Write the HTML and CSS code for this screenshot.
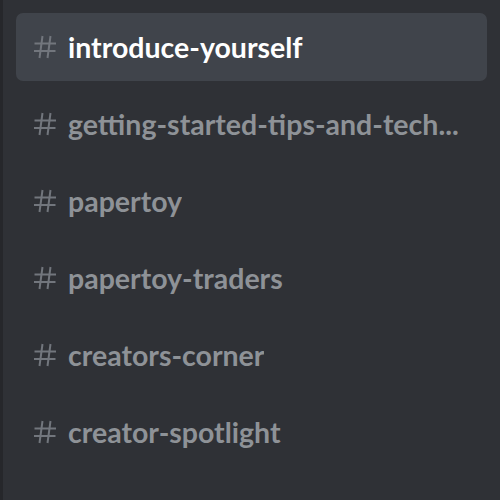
FILE: index.html
```html
<!DOCTYPE html>
<html lang="en">
<head>
    <meta charset="UTF-8">
    <meta name="viewport" content="width=device-width, initial-scale=1.0">
    <title>Channels</title>
<link rel="stylesheet" href="styles.css">
</head>
<body>
    <ul class="channels">
        <li class="channel active">
            <svg class="hash" viewBox="0 0 24 24"><path d="M9.5 1 L6.5 23 M17.5 1 L14.5 23 M1.5 8.5 H23 M1 16 H22.5"/></svg>
            <span class="name">introduce-yourself</span>
        </li>
        <li class="channel">
            <svg class="hash" viewBox="0 0 24 24"><path d="M9.5 1 L6.5 23 M17.5 1 L14.5 23 M1.5 8.5 H23 M1 16 H22.5"/></svg>
            <span class="name">getting-started-tips-and-tech...</span>
        </li>
        <li class="channel">
            <svg class="hash" viewBox="0 0 24 24"><path d="M9.5 1 L6.5 23 M17.5 1 L14.5 23 M1.5 8.5 H23 M1 16 H22.5"/></svg>
            <span class="name">papertoy</span>
        </li>
        <li class="channel">
            <svg class="hash" viewBox="0 0 24 24"><path d="M9.5 1 L6.5 23 M17.5 1 L14.5 23 M1.5 8.5 H23 M1 16 H22.5"/></svg>
            <span class="name">papertoy-traders</span>
        </li>
        <li class="channel">
            <svg class="hash" viewBox="0 0 24 24"><path d="M9.5 1 L6.5 23 M17.5 1 L14.5 23 M1.5 8.5 H23 M1 16 H22.5"/></svg>
            <span class="name">creators-corner</span>
        </li>
        <li class="channel">
            <svg class="hash" viewBox="0 0 24 24"><path d="M9.5 1 L6.5 23 M17.5 1 L14.5 23 M1.5 8.5 H23 M1 16 H22.5"/></svg>
            <span class="name">creator-spotlight</span>
        </li>
    </ul>
</body>
</html>
```
FILE: styles.css
```css
html, body {
    height: 100%;
}
body {
    font-family: Lato, "Open Sans", sans-serif;
    background-color: #2f3136;
    border-left: 3px solid #26272b;
    margin: 0;
    padding: 0;
}
.channels {
    list-style-type: none;
    margin: 0;
    padding: 13px 13px 0 13px;
    display: flex;
    flex-direction: column;
    gap: 9px;
}
.channel {
    height: 68px;
    display: flex;
    align-items: center;
    gap: 11px;
    padding: 0 17px;
    border-radius: 7px;
    color: #8e9297;
    font-size: 28.5px;
    font-weight: 700;
}
.channel.active {
    background-color: #40444b;
    color: #ffffff;
}
.hash {
    width: 24px;
    height: 24px;
    flex: none;
    fill: none;
    stroke: #72767d;
    stroke-width: 2;
}
.name {
    white-space: nowrap;
    overflow: hidden;
    text-overflow: ellipsis;
}
```
